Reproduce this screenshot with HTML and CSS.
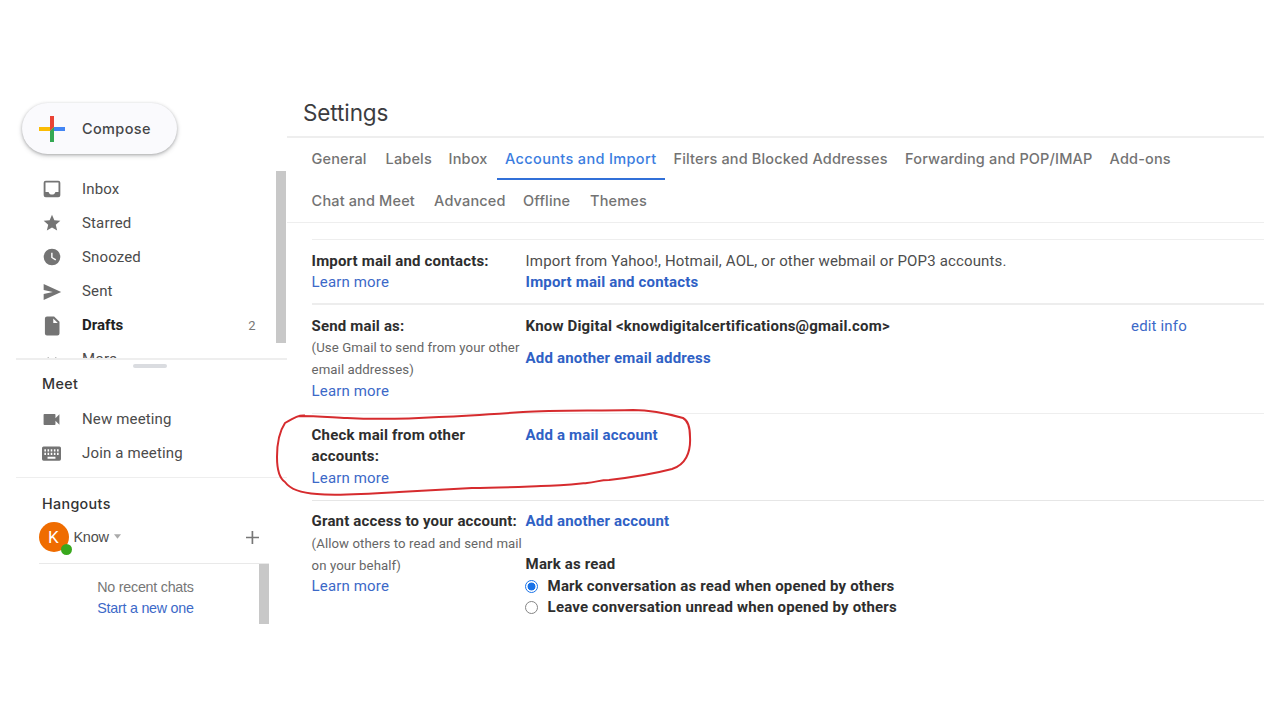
FILE: index.html
```html
<!DOCTYPE html>
<html lang="en">
<head>
<meta charset="utf-8">
<title>Settings</title>
<link rel="stylesheet" href="styles.css">
</head>
<body>
<div class="app">
  <aside class="sidebar">
    <button class="compose">
      <svg class="plus" viewBox="0 0 26 26"><path fill="#ea4335" d="M11 0h4v11l-4 4z"/><path fill="#fbbc04" d="M0 11h11v4H0z"/><path fill="#34a853" d="M11 15h4v11h-4z"/><path fill="#4285f4" d="M15 11h11v4H15z"/><path fill="#ea4335" d="M11 11h4l-4 4z"/><path fill="#34a853" d="M11 15l4-4v4z"/></svg>
      <span>Compose</span>
    </button>
    <div class="folders">
      <nav class="folder-list">
        <a class="item"><svg class="icon" viewBox="0 0 24 24"><path d="M19.500 2h-15A2.500 2.500 0 0 0 2 4.500v15A2.500 2.500 0 0 0 4.500 22h15a2.500 2.500 0 0 0 2.500-2.500v-15A2.500 2.500 0 0 0 19.500 2zm.3 13.500H16c0 1.700-1.800 3.200-4 3.200s-4-1.500-4-3.200H4.200V4.200h15.600z"/></svg><span>Inbox</span></a>
        <a class="item"><svg class="icon" viewBox="0 0 24 24"><path d="M12 17.270L18.180 21l-1.640-7.030L22 9.240l-7.190-.610L12 2 9.190 8.630 2 9.240l5.460 4.730L5.820 21z"/></svg><span>Starred</span></a>
        <a class="item"><svg class="icon" viewBox="0 0 24 24"><path fill-rule="evenodd" d="M12 2a10 10 0 1 0 0 20 10 10 0 0 0 0-20zm4 14.200L11 13V7h1.700v5.200l4.300 2.600z"/></svg><span>Snoozed</span></a>
        <a class="item"><svg class="icon" viewBox="0 0 24 24"><path d="M2 2.500l21 9.500L2 21.500V14.500L13 12 2 9.500z"/></svg><span>Sent</span></a>
        <a class="item unread"><svg class="icon" viewBox="0 0 24 24"><path fill-rule="evenodd" d="M6 .5h8.500L21 7v14a2.500 2.500 0 0 1-2.500 2.500H6A2.500 2.500 0 0 1 3.500 21V3A2.500 2.500 0 0 1 6 .5zM13.500 3v5.500H19z"/></svg><span>Drafts</span><span class="count">2</span></a>
        <a class="item"><svg class="icon" viewBox="0 0 24 24"><path d="M7.400 8.600L12 13.200l4.600-4.600L18 10l-6 6-6-6z"/></svg><span>More</span></a>
      </nav>
      <div class="scrollbar"></div>
    </div>
    <section class="meet">
      <div class="grip"></div>
      <h2 class="heading">Meet</h2>
      <a class="item"><svg class="icon" viewBox="0 0 24 24"><path d="M17 10.500V6a1 1 0 0 0-1-1H3a1 1 0 0 0-1 1v12a1 1 0 0 0 1 1h13a1 1 0 0 0 1-1v-4.500l5 5v-13z"/></svg><span>New meeting</span></a>
      <a class="item"><svg class="icon" viewBox="0 0 24 24"><path fill-rule="evenodd" d="M2 3h20a2 2 0 0 1 2 2v14a2 2 0 0 1-2 2H2a2 2 0 0 1-2-2V5a2 2 0 0 1 2-2zM3 6.500v3h2v-3zm4 0v3h2v-3zm4 0v3h2v-3zm4 0v3h2v-3zm4 0v3h2v-3zM3 11v3h2v-3zm4 0v3h2v-3zm4 0v3h2v-3zm4 0v3h2v-3zm4 0v3h2v-3zM7 16v2.500h10V16z"/></svg><span>Join a meeting</span></a>
    </section>
    <section class="hangouts">
      <h2 class="heading">Hangouts</h2>
      <div class="user">
        <div class="avatar">K<i class="status"></i></div>
        <span class="user-name">Know</span>
        <svg class="caret" viewBox="0 0 8 5"><path d="M0 0h8L4 5z"/></svg>
        <svg class="add" viewBox="0 0 14 14"><path d="M6 0h1.800v6.100H14v1.800H7.800V14H6V7.900H0V6.100h6z"/></svg>
      </div>
      <div class="chats">
        <div class="chat-text">No recent chats<br><a>Start a new one</a></div>
        <div class="scrollbar chat-bar"></div>
      </div>
    </section>
  </aside>

  <main class="main">
    <h1 class="title">Settings</h1>
    <nav class="tabs">
      <div class="tab-row first">
        <a>General</a><a>Labels</a><a>Inbox</a><a class="active">Accounts and Import</a><a>Filters and Blocked Addresses</a><a>Forwarding and POP/IMAP</a><a>Add-ons</a>
      </div>
      <div class="tab-row second">
        <a>Chat and Meet</a><a>Advanced</a><a>Offline</a><a>Themes</a>
      </div>
    </nav>
    <div class="rows">
      <section class="row import">
        <div><b>Import mail and contacts:</b><br><a>Learn more</a></div>
        <div>Import from Yahoo!, Hotmail, AOL, or other webmail or POP3 accounts.<br><a class="strong">Import mail and contacts</a></div>
      </section>
      <section class="row send">
        <div><b>Send mail as:</b><p class="note">(Use Gmail to send from your other<br>email addresses)</p><a>Learn more</a></div>
        <div><b class="address">Know Digital &lt;knowdigitalcertifications@gmail.com&gt;</b><a class="strong another">Add another email address</a></div>
        <div><a>edit info</a></div>
      </section>
      <section class="row check">
        <div><b>Check mail from other<br>accounts:</b><br><a>Learn more</a></div>
        <div><a class="strong">Add a mail account</a></div>
        <svg class="marker" viewBox="0 0 420 92"><path d="M30 8.500C24 8 20 10 10 16C4 25 2 36 2 50C2 62 4 71 10 75C15 82 25 86 42 87C62 89 92 87 124 85C158 83 179 82 197 81C221 81 241 80 266 79C285 79 302 77 312 76C322 75 325 73 334 73C351 71 378 67 397 62C410 58 416 46 415 30C415 22 414 14 408 11C394 7 375 3 358 3C320 4 280 3 248 5C219 7 187 9 164 10C130 12 91 12 72 11C52 10 40 9 24 9"/></svg>
      </section>
      <section class="row grant">
        <div><b>Grant access to your account:</b><p class="note">(Allow others to read and send mail<br>on your behalf)</p><a>Learn more</a></div>
        <div>
          <a class="strong">Add another account</a>
          <b class="mark">Mark as read</b>
          <label class="option"><i class="radio checked"></i><b>Mark conversation as read when opened by others</b></label>
          <label class="option"><i class="radio"></i><b>Leave conversation unread when opened by others</b></label>
        </div>
      </section>
    </div>
  </main>
</div>
</body>
</html>
```
FILE: styles.css
```css
* { box-sizing: border-box; }
body {
  margin: 0;
  background: #fff;
  color: #4d4d4d;
  font: 15px/21.4px Roboto, sans-serif;
  letter-spacing: .15px;
}
h1, h2, p { margin: 0; font-weight: 400; }
a { color: #3c69c8; }
.app { display: flex; width: 1280px; height: 720px; padding: 95px 16px 96px; overflow: hidden; }

/* Sidebar */
.sidebar { width: 271px; flex: none; }
.compose {
  display: flex;
  align-items: center;
  gap: 17px;
  width: 155px;
  height: 51px;
  margin: 8px 0 17px 6px;
  padding: 0 0 0 17px;
  border: 0;
  border-radius: 26px;
  background: #fafafd;
  box-shadow: 0 1px 3px rgba(60,64,67,.35), 0 2px 4px 1px rgba(60,64,67,.13);
  color: #454648;
  font: 500 14.500px/20px Inter, sans-serif;
  letter-spacing: .35px;
}
.plus { width: 26px; height: 26px; }
.folders { display: flex; height: 189px; padding-right: 1.500px; border-bottom: 2px solid #eee; overflow: hidden; }
.folder-list { flex: 1; padding: 1.200px 19px 0 0; }
.item {
  display: flex;
  align-items: center;
  height: 34.100px;
  padding-left: 26px;
  gap: 20px;
  color: #4b4b4b;
}
.icon { width: 20px; height: 20px; fill: #747474; flex: none; }
.unread { color: #222; font-weight: 700; letter-spacing: 0; }
.count { margin-left: auto; padding-right: 1px; color: #777; font-size: 13px; font-weight: 400; }
.scrollbar { width: 10px; height: 172px; background: #c8c8c8; }
.meet { height: 118px; padding-top: 3.500px; border-bottom: 1px solid #eee; }
.grip { width: 34px; height: 4px; margin-left: 117px; border-radius: 2px; background: #dadce0; }
.heading { color: #333; font: 500 14.300px/22px Inter, sans-serif; letter-spacing: .35px; padding-left: 26px; }
.meet .heading { margin: 5.500px 0 7.500px; }
.meet .icon { width: 19px; height: 19px; margin-right: 1px; }
.hangouts .heading { padding-top: 14.500px; }
.user { display: flex; align-items: center; height: 44px; margin-left: 22.500px; }
.avatar {
  position: relative;
  width: 30px;
  height: 30px;
  border-radius: 50%;
  background: #ef6c00;
  color: #fff;
  font-size: 17px;
  line-height: 30px;
  text-align: center;
}
.status { position: absolute; right: -3.500px; bottom: -3px; width: 11px; height: 11px; border-radius: 50%; background: #39a81d; }
.user-name { margin-left: 5px; font: 14.500px/20px "Liberation Sans", Arial, sans-serif; letter-spacing: -.300px; }
.caret { width: 7px; height: 5px; margin-left: 5px; fill: #aaa; }
.add { width: 13px; height: 13px; margin: 2px 28px 0 auto; fill: #777; }
.chats { display: flex; height: 61px; margin: 4px 18px 0 23px; border-top: 1px solid #e9e9e9; }
.chat-text { flex: 1; padding: 13px 0 0 58.300px; color: #777; font: 14.300px/21px "Liberation Sans", Arial, sans-serif; letter-spacing: -.250px; white-space: nowrap; }
.chat-bar { height: 60px; }

/* Settings */
.main { width: 977px; flex: none; }
.title {
  height: 43px;
  padding-left: 16px;
  border-bottom: 2px solid #eee;
  color: #3c3c3f;
  font: 400 22.500px/35px Inter, sans-serif;
  letter-spacing: -.100px;
}
.tabs { height: 85px; padding: 0 0 0 16px; border-bottom: 1px solid #eee; }
.tab-row { display: grid; }
.first { grid-template-columns: 74px 63px 56.500px 168.500px 231.500px 204.500px 90px; }
.second { grid-template-columns: 122.500px 89px 67px 90px; }
.tab-row a {
  height: 42px;
  padding-left: 8.600px;
  color: #737373;
  font: 500 14.500px/42px Inter, sans-serif;
  letter-spacing: .150px;
  white-space: nowrap;
}
.tab-row a.active { color: #3b7de0; border-bottom: 2px solid #3170d8; letter-spacing: .350px; }
.rows { margin: 16px 0 0 24.600px; border-top: 1px solid #eee; }
.row { display: grid; grid-template-columns: 214px 605.500px 1fr; padding-top: 10.800px; border-bottom: 1px solid #e6e6e6; white-space: nowrap; }
.row b { color: #2e2e2e; font-weight: 700; }
.strong, .row b { letter-spacing: .170px; }
.strong { font-weight: 700; color: #2f61c5; }
.row.import { height: 65px; border-bottom: 2px solid #ededed; }
.row.send { height: 109px; border-bottom-color: #eee; }
.row.check { position: relative; height: 86.500px; }
.row.grant { border: 0; }
.note { font-size: 13.200px; line-height: 21.800px; letter-spacing: .090px; color: #666; }
.another, .address, .mark { display: block; }
.another { margin-top: 11px; }
.mark { margin-top: 21.400px; }
.option { display: flex; align-items: center; gap: 10px; margin-left: -1px; }
.radio { width: 13px; height: 13px; border: 1px solid #858585; border-radius: 50%; }
.radio.checked { border-color: #1a73e8; background: radial-gradient(circle, #1a73e8 0 3.600px, #fff 4.300px); }
.marker { position: absolute; left: -36.500px; top: -7.500px; width: 420px; height: 92px; fill: none; stroke: #d62b2e; stroke-width: 2; stroke-linejoin: round; }
```
